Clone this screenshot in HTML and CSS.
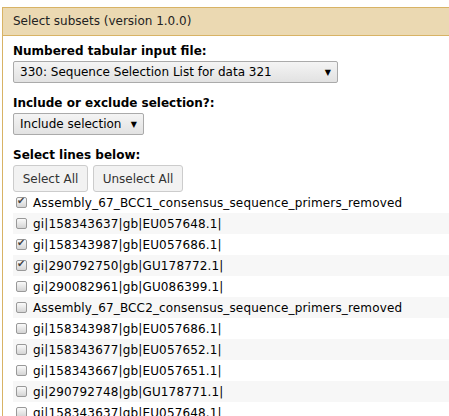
FILE: index.html
```html
<!DOCTYPE html>
<html>
<head>
<meta charset="utf-8">
<link rel="stylesheet" href="styles.css">
</head>
<body>
<div class="panel">
  <div class="panel-title">Select subsets (version 1.0.0)</div>
  <div class="panel-body">
    <div class="field">
      <div class="label">Numbered tabular input file:</div>
      <div class="select wide"><span>330: Sequence Selection List for data 321</span><span class="arrow">▼</span></div>
    </div>
    <div class="field">
      <div class="label">Include or exclude selection?:</div>
      <div class="select narrow"><span>Include selection</span><span class="arrow">▼</span></div>
    </div>
    <div class="field">
      <div class="label">Select lines below:</div>
      <div class="buttons">
        <button class="btn btn-all">Select All</button>
        <button class="btn btn-none">Unselect All</button>
      </div>
      <div class="rows">
        <label class="row"><span class="cb checked"></span>Assembly_67_BCC1_consensus_sequence_primers_removed</label>
        <label class="row"><span class="cb"></span>gi|158343637|gb|EU057648.1|</label>
        <label class="row"><span class="cb checked"></span>gi|158343987|gb|EU057686.1|</label>
        <label class="row"><span class="cb checked"></span>gi|290792750|gb|GU178772.1|</label>
        <label class="row"><span class="cb"></span>gi|290082961|gb|GU086399.1|</label>
        <label class="row"><span class="cb"></span>Assembly_67_BCC2_consensus_sequence_primers_removed</label>
        <label class="row"><span class="cb"></span>gi|158343987|gb|EU057686.1|</label>
        <label class="row"><span class="cb"></span>gi|158343677|gb|EU057652.1|</label>
        <label class="row"><span class="cb"></span>gi|158343667|gb|EU057651.1|</label>
        <label class="row"><span class="cb"></span>gi|290792748|gb|GU178771.1|</label>
        <label class="row"><span class="cb"></span>gi|158343637|gb|EU057648.1|</label>
      </div>
    </div>
  </div>
</div>
</body>
</html>
```
FILE: styles.css
```css
html, body {
  margin: 0;
  padding: 0;
  background: #fff;
}
body {
  padding: 7px 0 0 2px;
  font-family: "DejaVu Sans", Verdana, sans-serif;
  font-size: 12px;
  color: #000;
  overflow: hidden;
}
.panel {
  border-left: 1px solid #d8b365;
  border-top: 1px solid #d8b365;
}
.panel-title {
  background: #ebd9b2;
  border-bottom: 1px solid #d8b365;
  height: 27px;
  line-height: 27px;
  padding-left: 10px;
  font-size: 12px;
  color: #222;
}
.panel-body {
  padding: 7px 0 0 10px;
}
.field {
  margin-bottom: 12px;
}
.label {
  font-weight: bold;
  line-height: 16px;
  margin-bottom: 2px;
}
.select {
  display: flex;
  justify-content: space-between;
  align-items: center;
  height: 20px;
  border: 1px solid #aaa;
  border-radius: 2px;
  background: linear-gradient(#f4f4f4, #e2e2e2);
  padding: 0 6px 0 6px;
  box-sizing: content-box;
}
.select.wide { width: 311px; }
.select.narrow { width: 117px; }
.arrow {
  font-size: 8px;
}
.buttons {
  display: flex;
  gap: 5px;
}
.btn {
  font-family: "DejaVu Sans", Verdana, sans-serif;
  font-size: 12px;
  color: #333;
  height: 27px;
  border: 1px solid #ccc;
  border-radius: 3px;
  background: #f2f2f2;
  padding: 0;
  margin: 0;
  box-sizing: border-box;
}
.btn-all { width: 75px; }
.btn-none { width: 90px; }
.row {
  display: flex;
  align-items: center;
  height: 21px;
  font-size: 12px;
  letter-spacing: 0.15px;
}
.row:nth-child(even) {
  background: #f7f7f7;
}
.cb {
  width: 9px;
  height: 9px;
  margin: 0 6px 0 3px;
  border: 1px solid #999;
  border-radius: 2px;
  background: linear-gradient(#fafafa, #d4d4d4);
  position: relative;
  flex: none;
}
.cb.checked::after {
  content: "✔";
  position: absolute;
  left: 0;
  top: -3px;
  font-size: 10px;
  letter-spacing: 0;
  color: #444;
}
```
